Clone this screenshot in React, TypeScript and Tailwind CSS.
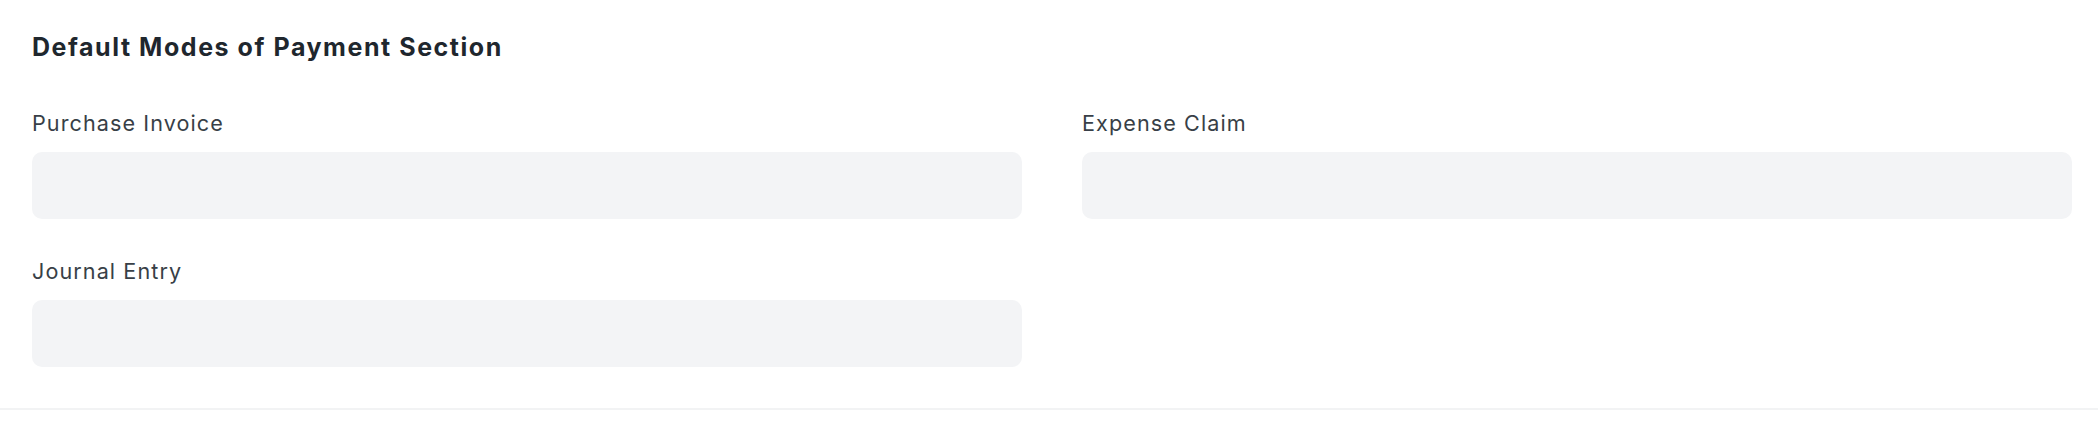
import React from "react";

function Field({ label }: { label: string }) {
  return (
    <div className="flex flex-col">
      <label className="text-[21.6px] leading-[28px] tracking-[0.05em] text-[#383f47] font-normal">{label}</label>
      <div className="mt-[15.5px] h-[67px] rounded-[10px] bg-[#f3f4f6]" />
    </div>
  );
}

export default function App() {
  return (
    <div className="w-full bg-white" style={{ fontFamily: "Inter, 'Noto Sans', sans-serif" }}>
      <div className="border-b-2 border-[#f2f3f4] pl-[32px] pr-[26px] pt-[31px] pb-[41px]">
        <h2 className="text-[25px] leading-[32px] tracking-[0.062em] font-bold text-[#1f272e]">Default Modes of Payment Section</h2>
        <div className="mt-[45.5px] grid grid-cols-2 gap-x-[60px] gap-y-[37.5px]">
          <Field label="Purchase Invoice" />
          <Field label="Expense Claim" />
          <Field label="Journal Entry" />
        </div>
      </div>
    </div>
  );
}
